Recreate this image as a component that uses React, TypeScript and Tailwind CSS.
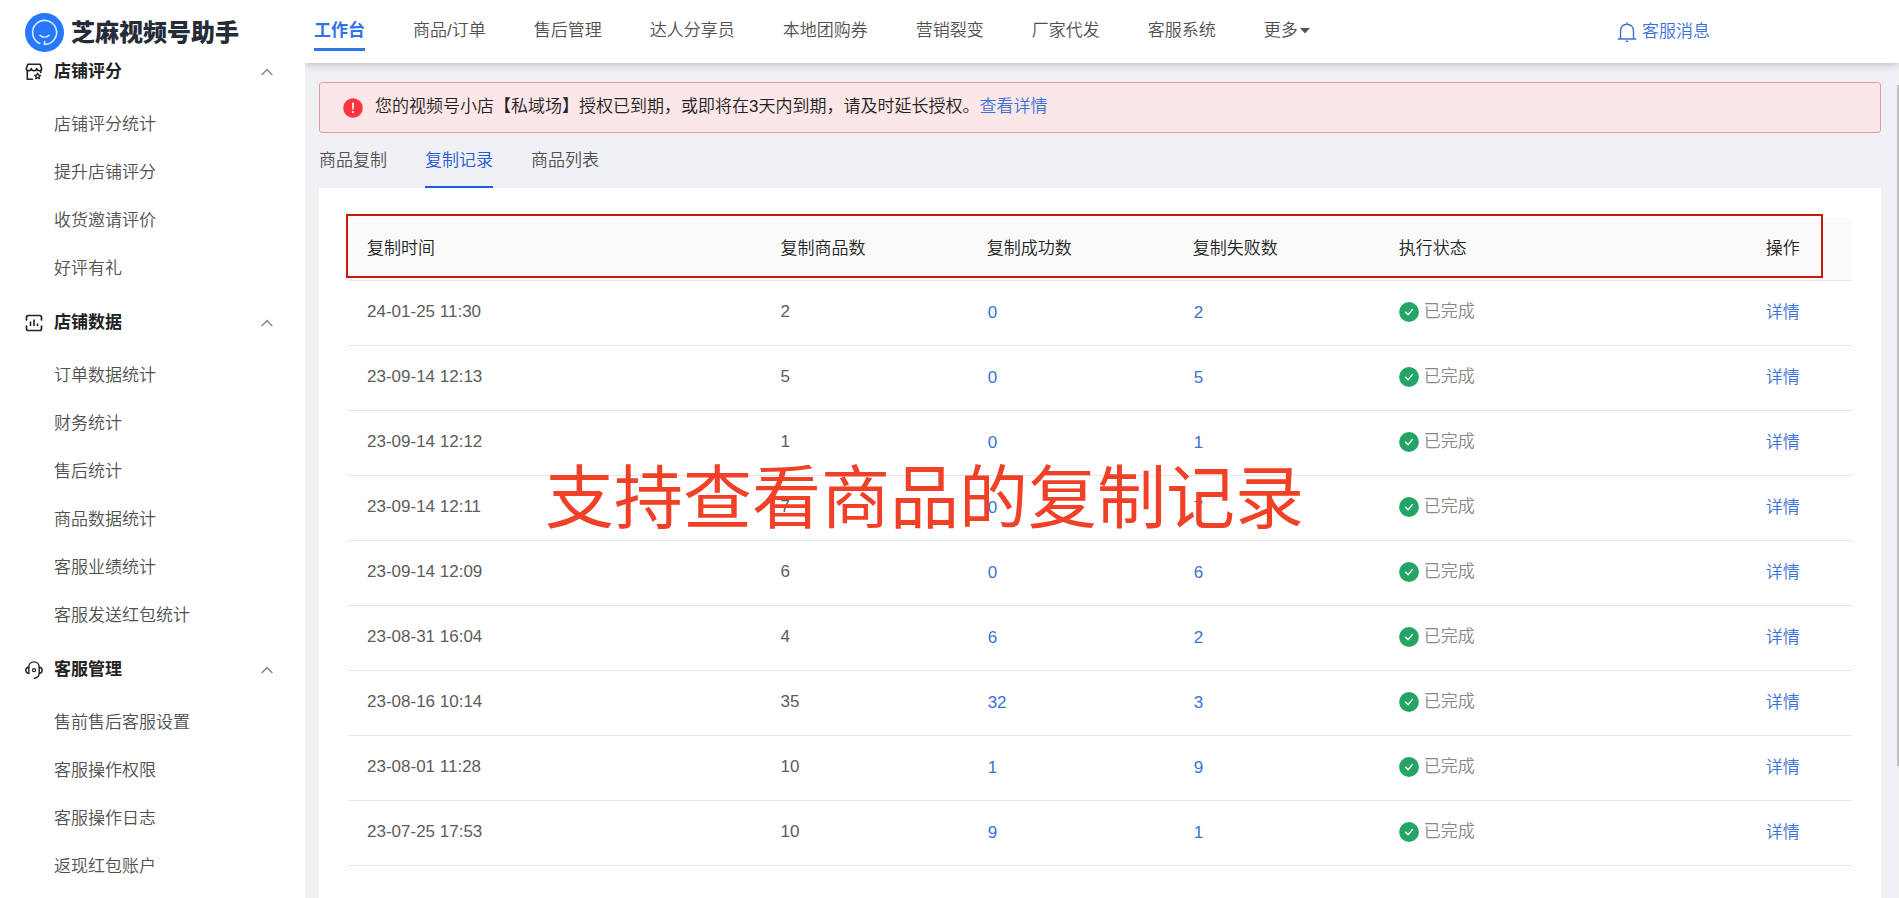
import React from 'react';
import { clsx } from 'clsx';

interface MenuSection {
  title: string;
  icon: React.FC;
  items: string[];
}

interface CopyRecord {
  time: string;
  total: number;
  success: number;
  failed: number;
}

const ShopIcon: React.FC = () => (
  <svg width="18" height="18" viewBox="0 0 18 18" fill="none" stroke="#222" strokeWidth="1.6" strokeLinejoin="round">
    <path d="M2.8 1.3h12.4l1.5 4.2c0 1.4-1 2.2-2.4 2.2s-2.6-.9-2.6-2.2c0 1.3-1.2 2.2-2.7 2.2S6.3 6.8 6.3 5.5c0 1.3-1.2 2.2-2.6 2.2S1.3 6.9 1.3 5.5z" />
    <path d="M2.3 8v8.2h5.2M15.7 8v1.5" strokeLinecap="round" />
    <path d="M12.6 10.2l.9 1.8 2 .3-1.5 1.4.4 2-1.8-1-1.8 1 .4-2-1.5-1.4 2-.3z" strokeWidth="1.3" />
  </svg>
);

const DataIcon: React.FC = () => (
  <svg width="18" height="18" viewBox="0 0 18 18" fill="none" stroke="#222" strokeWidth="1.7" strokeLinecap="round">
    <path d="M1.5 6V3.2c0-1 .7-1.7 1.7-1.7h11.6c1 0 1.7.7 1.7 1.7V6M1.5 12v2.8c0 1 .7 1.7 1.7 1.7h11.6c1 0 1.7-.7 1.7-1.7V12" />
    <path d="M5.5 7.5V12M9 5.500V12M12.5 9.5V12" strokeLinecap="butt" strokeWidth="1.6" />
  </svg>
);

const HeadsetIcon: React.FC = () => (
  <svg width="18" height="18" viewBox="0 0 18 18" fill="none" stroke="#222" strokeWidth="1.4" strokeLinecap="round">
    <path d="M3.8 12.3V6.2C3.8 3 6.1.9 9 .9s5.2 2.1 5.2 5.3v6.1c0 2.6-1.8 4.500-4.700 4.900" />
    <path d="M3.8 6.2C1.900 6.300.8 7.500.8 9.200s1.100 3 3 3.100M14.200 6.200c1.900.1 3 1.300 3 3s-1.100 3-3 3.100" />
    <circle cx="9" cy="9.200" r="1.500" strokeWidth="1.200" />
  </svg>
);

const LogoIcon: React.FC = () => (
  <svg width="39" height="39" viewBox="0 0 39 39" fill="none" stroke="#d9ecff" strokeWidth="1.6" strokeLinecap="round" strokeLinejoin="round">
    <circle cx="19.5" cy="19.5" r="19.5" fill="#2878ff" stroke="none" />
    <path d="M14.8 30.4A12 12 0 1 1 19.5 31.4V28.6" />
    <path d="M15 22.3c2.600 2.300 6.400 2.300 9 0" />
  </svg>
);

const BellIcon: React.FC = () => (
  <svg width="20" height="20" viewBox="0 0 20 20" fill="none" stroke="#3b71d9" strokeWidth="1.4">
    <path d="M3.5 17V9C3.5 5 6.3 2.2 10 2.2S16.5 5 16.5 9v8M.7 17h18.6M10 .5v1.8M8.8 19.3h2.4" />
  </svg>
);

const ChevronIcon: React.FC = () => (
  <svg width="12" height="8" viewBox="0 0 12 8" fill="none" stroke="#8c8c8c" strokeWidth="1.5">
    <path d="M.6 7L6 1.6 11.4 7" />
  </svg>
);

const WarningIcon: React.FC = () => (
  <svg width="20" height="20" viewBox="0 0 20 20">
    <circle cx="10" cy="10" r="9.800" fill="#fb3640" />
    <path d="M9 4.800h2l-.3 6.800H9.300z" fill="#fff" />
    <circle cx="10" cy="14" r="1.100" fill="#fff" />
  </svg>
);

const DoneIcon: React.FC = () => (
  <svg width="20" height="20" viewBox="0 0 20 20" className="shrink-0">
    <circle cx="10" cy="10" r="9.900" fill="#25a565" />
    <path d="M6.200 9.800l2.900 2.900 4.600-5.600" fill="none" stroke="#fff" strokeWidth="1.400" />
  </svg>
);

const menuSections: MenuSection[] = [
  { title: '店铺评分', icon: ShopIcon, items: ['店铺评分统计', '提升店铺评分', '收货邀请评价', '好评有礼'] },
  {
    title: '店铺数据',
    icon: DataIcon,
    items: ['订单数据统计', '财务统计', '售后统计', '商品数据统计', '客服业绩统计', '客服发送红包统计'],
  },
  { title: '客服管理', icon: HeadsetIcon, items: ['售前售后客服设置', '客服操作权限', '客服操作日志', '返现红包账户'] },
];

const navItems = ['工作台', '商品/订单', '售后管理', '达人分享员', '本地团购券', '营销裂变', '厂家代发', '客服系统'];

const tabs = ['商品复制', '复制记录', '商品列表'];

const columns = [
  { label: '复制时间', width: 'w-[27.5%]' },
  { label: '复制商品数', width: 'w-[13.7%]' },
  { label: '复制成功数', width: 'w-[13.7%]' },
  { label: '复制失败数', width: 'w-[13.7%]' },
  { label: '执行状态', width: 'w-[24.4%]' },
  { label: '操作', width: '' },
];

const records: CopyRecord[] = [
  { time: '24-01-25 11:30', total: 2, success: 0, failed: 2 },
  { time: '23-09-14 12:13', total: 5, success: 0, failed: 5 },
  { time: '23-09-14 12:12', total: 1, success: 0, failed: 1 },
  { time: '23-09-14 12:11', total: 7, success: 0, failed: 7 },
  { time: '23-09-14 12:09', total: 6, success: 0, failed: 6 },
  { time: '23-08-31 16:04', total: 4, success: 6, failed: 2 },
  { time: '23-08-16 10:14', total: 35, success: 32, failed: 3 },
  { time: '23-08-01 11:28', total: 10, success: 1, failed: 9 },
  { time: '23-07-25 17:53', total: 10, success: 9, failed: 1 },
];

const Sidebar: React.FC = () => (
  <aside className="w-[305px] shrink-0 overflow-hidden bg-white">
    <div className="flex h-[53px] items-end gap-[7px] pb-px pl-[25px]">
      <LogoIcon />
      <h1 className="text-[24px] leading-[39px] font-black text-[#262b38]">芝麻视频号助手</h1>
    </div>
    <nav className="flex flex-col gap-[11px]">
      {menuSections.map((section) => {
        const Icon = section.icon;
        return (
          <section key={section.title}>
            <button className="mb-[10px] flex h-[38px] w-full items-center pr-8 pl-[25px] font-bold text-[#222]">
              <Icon />
              <span className="mr-auto ml-[11px]">{section.title}</span>
              <ChevronIcon />
            </button>
            {section.items.map((item) => (
              <a key={item} href="#" className="flex h-12 items-center pl-[54px] text-[#505050]">
                {item}
              </a>
            ))}
          </section>
        );
      })}
    </nav>
  </aside>
);

const TopBar: React.FC = () => (
  <header className="relative z-10 flex h-[63px] shrink-0 items-center justify-between bg-white pr-[189px] pl-[9px] text-[#505050] shadow-[0_2px_8px_rgba(0,0,0,0.2)] [clip-path:inset(0_0_-12px_0)]">
    <nav className="flex gap-12 self-start pt-4">
      {navItems.map((item, index) => (
        <a
          key={item}
          href="#"
          className={clsx(
            'border-b-[3px] pb-[3px] leading-[29px]',
            index === 0 ? 'border-[#3272e8] font-bold text-[#3272e8]' : 'border-transparent'
          )}
        >
          {item}
        </a>
      ))}
      <button className="flex items-center gap-[2px] border-b-[3px] border-transparent pb-[3px] leading-[29px]">
        更多
        <svg width="10" height="6" viewBox="0 0 10 6" fill="#555">
          <path d="M0 0h10L5 5.5z" />
        </svg>
      </button>
    </nav>
    <a href="#" className="flex items-center gap-[5px] text-[#3b71d9]">
      <BellIcon />
      客服消息
    </a>
  </header>
);

const RecordTable: React.FC = () => (
  <div className="relative">
    <table className="w-full table-fixed border-separate border-spacing-0 text-left text-[#5c5c5c]">
      <thead>
        <tr className="h-16 text-[#222]">
          {columns.map((column) => (
            <th
              key={column.label}
              className={clsx(
                'border-b border-[#e6e6e6] bg-[#fafafa] px-[19px] font-[350] first:rounded-tl-md last:rounded-tr-md',
                column.width
              )}
            >
              {column.label}
            </th>
          ))}
        </tr>
      </thead>
      <tbody>
        {records.map((record) => (
          <tr key={record.time} className="h-[65px]">
            <td className="border-b border-[#e6e6e6] px-[19px] pb-[2px]">{record.time}</td>
            <td className="border-b border-[#e6e6e6] px-[19px] pb-[2px]">{record.total}</td>
            <td className="border-b border-[#e6e6e6] px-5">
              <a href="#" className="text-[#3b71d9]">{record.success}</a>
            </td>
            <td className="border-b border-[#e6e6e6] px-5">
              <a href="#" className="text-[#3b71d9]">{record.failed}</a>
            </td>
            <td className="border-b border-[#e6e6e6] px-[19px] pb-[2px]">
              <span className="flex items-center gap-[5px] text-[#888]">
                <DoneIcon />
                已完成
              </span>
            </td>
            <td className="border-b border-[#e6e6e6] px-[19px]">
              <a href="#" className="text-[#3b71d9]">详情</a>
            </td>
          </tr>
        ))}
      </tbody>
    </table>
    {/* Annotations over the table */}
    <div className="pointer-events-none absolute -top-[3px] right-[29px] -left-[2px] h-16 border-2 border-[#c81a08]" />
    <p className="pointer-events-none absolute top-[233px] left-[197px] text-[69px] leading-[100px] font-normal whitespace-nowrap text-[#f04128]">
      支持查看商品的复制记录
    </p>
  </div>
);

export default function App() {
  return (
    <div className="flex h-screen overflow-hidden bg-white font-['Liberation_Sans','Noto_Sans_CJK_SC',sans-serif] text-[17px] leading-6 font-[350]">
      <Sidebar />
      <div className="flex min-w-0 flex-1 flex-col">
        <TopBar />
        <div className="flex min-h-0 flex-1 bg-[#f0f1f5]">
          <main className="flex min-w-0 flex-1 flex-col pt-[19px] pr-4 pl-[14px]">
            <div className="flex h-[51px] shrink-0 items-center rounded-[3px] border border-[#e59a9e] bg-[#fbe6e8] pl-[23px] text-[#222]">
              <WarningIcon />
              <p className="ml-3 pb-[2px]">
                您的视频号小店【私域场】授权已到期，或即将在3天内到期，请及时延长授权。
                <a href="#" className="text-[#3b71d9]">查看详情</a>
              </p>
            </div>
            <div className="flex h-[55px] shrink-0 gap-[38px]">
              {tabs.map((tab) => (
                <button
                  key={tab}
                  className={clsx(
                    'border-b-2 pt-[2px]',
                    tab === '复制记录' ? 'border-[#2159d6] text-[#2159d6]' : 'border-transparent text-[#505050]'
                  )}
                >
                  {tab}
                </button>
              ))}
            </div>
            <div className="flex-1 bg-white px-[29px] pt-[29px]">
              <RecordTable />
            </div>
          </main>
          <div className="w-[2px] bg-[#f1f1f1] pt-[22px]">
            <div className="h-[681px] bg-[#c1c1c1]" />
          </div>
        </div>
      </div>
    </div>
  );
}
